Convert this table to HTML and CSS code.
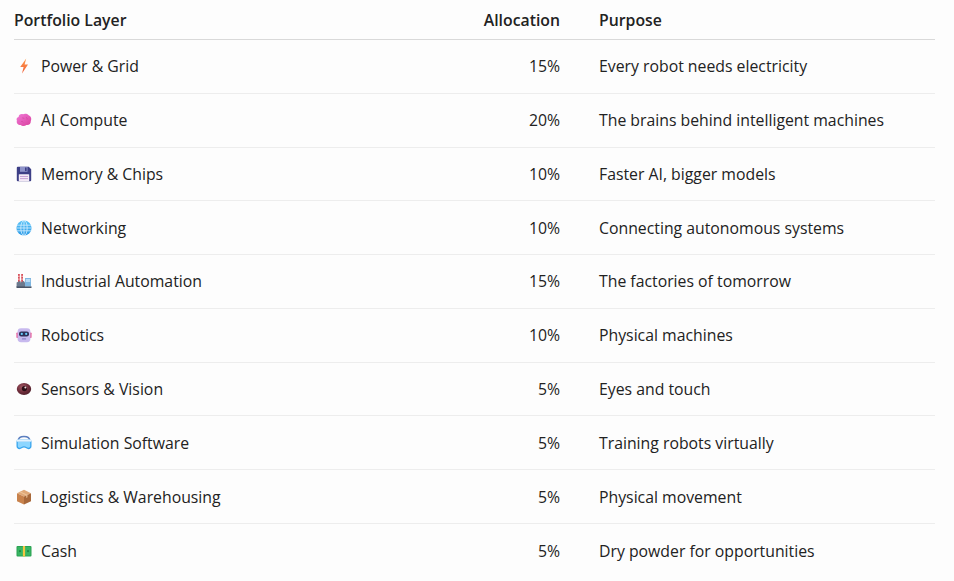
FILE: index.html
```html
<!DOCTYPE html>
<html lang="en">
<head>
<meta charset="utf-8">
<title>Portfolio Layers</title>
<link rel="stylesheet" href="styles.css">
</head>
<body>
<table class="portfolio">
  <thead>
    <tr>
      <th class="col-layer">Portfolio Layer</th>
      <th class="col-alloc">Allocation</th>
      <th class="col-purpose">Purpose</th>
    </tr>
  </thead>
  <tbody>
    <tr>
      <td class="col-layer"><span class="layer"><svg class="ico" viewBox="0 0 16 16"><defs><linearGradient id="gb" x1="0" y1="0" x2="0" y2="1"><stop offset="0" stop-color="#ff9a4a"/><stop offset="1" stop-color="#f0603a"/></linearGradient></defs><path d="M10.2 0.5 L4.2 9 L7.6 9 L6 15.5 L12 6.6 L8.6 6.6 Z" fill="url(#gb)"/></svg>Power &amp; Grid</span></td>
      <td class="col-alloc">15%</td>
      <td class="col-purpose">Every robot needs electricity</td>
    </tr>
    <tr>
      <td class="col-layer"><span class="layer"><svg class="ico" viewBox="0 0 16 16"><defs><linearGradient id="gbr" x1="0" y1="0" x2="1" y2="1"><stop offset="0" stop-color="#f07ad8"/><stop offset="1" stop-color="#d9409c"/></linearGradient></defs><path d="M2.6 5 C2.6 2.4 5.2 1.6 7 2.3 C8.6 1.4 11.3 1.7 12.6 3.3 C15.2 4 15.8 7.3 14.8 9 C15.1 11.6 12.8 13.6 10.4 13 C8.8 14.5 5.9 14.3 4.8 13 C2.1 13.2 0 11 0.9 8.7 C0 7 0.9 5.1 2.6 5 Z" fill="url(#gbr)"/><path d="M6 6 C7 5.6 8 6.2 8.4 7 M10 5 C11 5.6 11.4 6.6 11 7.6 M5 9.6 C6 9.2 7 9.8 7.4 10.4" stroke="#c0308a" stroke-width="0.7" fill="none" opacity="0.5"/></svg>AI Compute</span></td>
      <td class="col-alloc">20%</td>
      <td class="col-purpose">The brains behind intelligent machines</td>
    </tr>
    <tr>
      <td class="col-layer"><span class="layer"><svg class="ico" viewBox="0 0 16 16"><path d="M0.8 1.8 A1 1 0 0 1 1.8 0.8 L12.8 0.8 L15.2 3.2 L15.2 14.2 A1 1 0 0 1 14.2 15.2 L1.8 15.2 A1 1 0 0 1 0.8 14.2 Z" fill="#3d3f86"/><rect x="4" y="0.8" width="7.5" height="5" fill="#8e93c9"/><rect x="9" y="1.5" width="1.6" height="3.6" fill="#3d3f86"/><rect x="2.8" y="8.2" width="10.4" height="7" rx="0.6" fill="#f3eaf6"/><rect x="4" y="10" width="8" height="0.9" fill="#c29ad2"/><rect x="4" y="12.2" width="8" height="0.9" fill="#c29ad2"/></svg>Memory &amp; Chips</span></td>
      <td class="col-alloc">10%</td>
      <td class="col-purpose">Faster AI, bigger models</td>
    </tr>
    <tr>
      <td class="col-layer"><span class="layer"><svg class="ico" viewBox="0 0 16 16"><defs><linearGradient id="gg" x1="0" y1="0" x2="0" y2="1"><stop offset="0" stop-color="#5cc4f7"/><stop offset="1" stop-color="#2e9be6"/></linearGradient></defs><circle cx="8" cy="8" r="7.6" fill="url(#gg)"/><g stroke="#d6efff" stroke-width="0.8" fill="none"><ellipse cx="8" cy="8" rx="3.2" ry="7.6"/><line x1="8" y1="0.4" x2="8" y2="15.6"/><line x1="1" y1="5.2" x2="15" y2="5.2"/><line x1="0.4" y1="8" x2="15.6" y2="8"/><line x1="1" y1="10.8" x2="15" y2="10.8"/></g></svg>Networking</span></td>
      <td class="col-alloc">10%</td>
      <td class="col-purpose">Connecting autonomous systems</td>
    </tr>
    <tr>
      <td class="col-layer"><span class="layer"><svg class="ico" viewBox="0 0 16 16"><rect x="2" y="1" width="1.8" height="9" fill="#d8505a"/><rect x="5.2" y="1" width="1.8" height="9" fill="#d8505a"/><rect x="2" y="2.8" width="1.8" height="1" fill="#f4c3c6"/><rect x="5.2" y="2.8" width="1.8" height="1" fill="#f4c3c6"/><rect x="2" y="5.6" width="1.8" height="1" fill="#f4c3c6"/><rect x="5.2" y="5.6" width="1.8" height="1" fill="#f4c3c6"/><rect x="9" y="5" width="6" height="8.5" fill="#7fb6e0"/><rect x="9.8" y="6" width="4.4" height="3" fill="#b9dcf5"/><path d="M0.6 9.5 L4.5 7.8 L4.5 9.5 L8.2 7.8 L8.2 9.5 L9 9 L9 14 L0.6 14 Z" fill="#6c7a8e"/><rect x="0.5" y="13.4" width="15" height="1.6" fill="#4a5567"/></svg>Industrial Automation</span></td>
      <td class="col-alloc">15%</td>
      <td class="col-purpose">The factories of tomorrow</td>
    </tr>
    <tr>
      <td class="col-layer"><span class="layer"><svg class="ico" viewBox="0 0 16 16"><rect x="0.4" y="5.5" width="2.2" height="5.5" rx="0.8" fill="#e7609a"/><rect x="13.4" y="5.5" width="2.2" height="5.5" rx="0.8" fill="#e7609a"/><rect x="1.6" y="1.2" width="12.8" height="14" rx="3.4" fill="#c7b9ee"/><rect x="3" y="4.4" width="10" height="5" rx="2.2" fill="#2f2f57"/><circle cx="5.8" cy="6.9" r="1.1" fill="#6ad0ff"/><circle cx="10.2" cy="6.9" r="1.1" fill="#6ad0ff"/><rect x="5.8" y="11.2" width="4.4" height="1.4" rx="0.7" fill="#8a7fc4"/></svg>Robotics</span></td>
      <td class="col-alloc">10%</td>
      <td class="col-purpose">Physical machines</td>
    </tr>
    <tr>
      <td class="col-layer"><span class="layer"><svg class="ico" viewBox="0 0 16 16"><defs><radialGradient id="ge" cx="0.4" cy="0.35" r="0.7"><stop offset="0" stop-color="#a45a66"/><stop offset="0.6" stop-color="#6e2c3a"/><stop offset="1" stop-color="#4b1e28"/></radialGradient></defs><ellipse cx="8" cy="8" rx="7.2" ry="6" fill="url(#ge)"/><circle cx="8.4" cy="7.6" r="2.6" fill="#2a0f16"/><circle cx="9.4" cy="6.6" r="1" fill="#f2d9dd"/></svg>Sensors &amp; Vision</span></td>
      <td class="col-alloc">5%</td>
      <td class="col-purpose">Eyes and touch</td>
    </tr>
    <tr>
      <td class="col-layer"><span class="layer"><svg class="ico" viewBox="0 0 16 16"><path d="M2.2 6 C2.2 2.2 5 1.6 8 1.6 C11 1.6 13.8 2.2 13.8 6" fill="none" stroke="#5c7fbf" stroke-width="1.5"/><path d="M0.5 6.5 C0.5 5.4 1.2 4.6 2.3 4.6 L13.7 4.6 C14.8 4.6 15.5 5.4 15.5 6.5 L15.5 11.3 C15.5 13 14.2 14.2 12.5 14.2 C10.6 14.2 9.8 12.6 8 12.6 C6.2 12.6 5.4 14.2 3.5 14.2 C1.8 14.2 0.5 13 0.5 11.3 Z" fill="#3aa6ee"/><path d="M1.8 7 L14.2 7 L14.2 11 C14.2 12.2 13.3 12.8 12.4 12.8 C11 12.8 10 11.3 8 11.3 C6 11.3 5 12.8 3.6 12.8 C2.7 12.8 1.8 12.2 1.8 11 Z" fill="#8dd6ff"/><rect x="0.5" y="4.6" width="15" height="2.2" rx="1.1" fill="#e4f3ff"/></svg>Simulation Software</span></td>
      <td class="col-alloc">5%</td>
      <td class="col-purpose">Training robots virtually</td>
    </tr>
    <tr>
      <td class="col-layer"><span class="layer"><svg class="ico" viewBox="0 0 16 16"><path d="M8 0.8 L15 4.2 L8 7.6 L1 4.2 Z" fill="#e0a877"/><path d="M1 4.2 L8 7.6 L8 15.4 L1 12.2 Z" fill="#c8824c"/><path d="M15 4.2 L8 7.6 L8 15.4 L15 12.2 Z" fill="#a8683a"/><path d="M4.5 2.4 L11.5 5.8 L11.5 8.3 L10.2 8.9 L10.2 6.5 L3.2 3.1 Z" fill="#f0c9a0" opacity="0.8"/></svg>Logistics &amp; Warehousing</span></td>
      <td class="col-alloc">5%</td>
      <td class="col-purpose">Physical movement</td>
    </tr>
    <tr>
      <td class="col-layer"><span class="layer"><svg class="ico" viewBox="0 0 16 16"><rect x="0.5" y="3" width="15" height="10.5" rx="1" fill="#2aa152"/><rect x="1.5" y="4" width="13" height="8.5" rx="0.5" fill="#38b563"/><rect x="6.9" y="3" width="2.2" height="10.5" fill="#f4c542"/><circle cx="4" cy="8.2" r="1.1" fill="#1f8a43"/><circle cx="12" cy="8.2" r="1.1" fill="#1f8a43"/></svg>Cash</span></td>
      <td class="col-alloc">5%</td>
      <td class="col-purpose">Dry powder for opportunities</td>
    </tr>
  </tbody>
</table>
</body>
</html>
```
FILE: styles.css
```css
html, body {
  margin: 0;
  padding: 0;
  background: #fdfdfd;
}
body {
  font-family: "Open Sans", "Noto Sans", sans-serif;
  font-size: 15.8px;
  color: #222222;
  padding-left: 14px;
}
.portfolio {
  border-collapse: collapse;
  width: 921px;
}
.portfolio th {
  font-weight: 600;
  line-height: 24px;
  height: 24px;
  padding: 8px 0 7px 0;
  text-align: left;
  border-bottom: 1px solid #d9d9d9;
}
.portfolio td {
  line-height: 24px;
  height: 53.78px;
  box-sizing: border-box;
  padding: 0;
  vertical-align: middle;
  border-bottom: 1px solid #ededed;
}
.portfolio tbody tr:last-child td {
  border-bottom: none;
}
.col-layer {
  width: 440px;
}
.col-alloc {
  width: 106px;
  text-align: right;
}
.portfolio th.col-alloc {
  text-align: right;
}
.col-purpose {
  padding-left: 39px !important;
}
.layer {
  display: flex;
  align-items: center;
  height: 24px;
}
.ico {
  width: 16px;
  height: 16px;
  margin-left: 2px;
  margin-right: 9px;
  flex: none;
}
```
